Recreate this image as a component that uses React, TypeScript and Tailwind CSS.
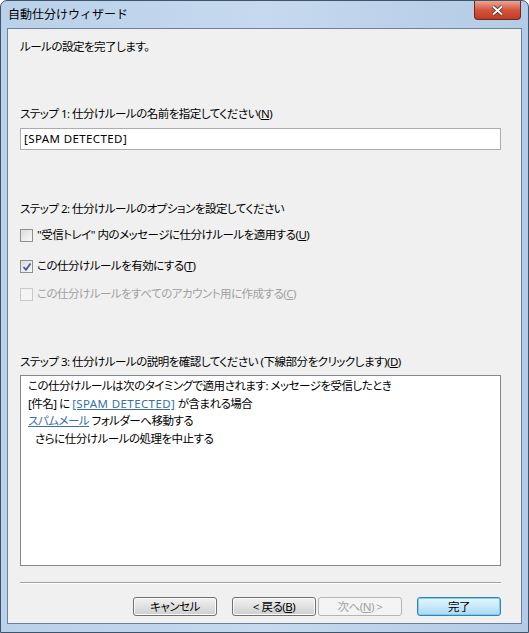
import React from "react";

const font = "font-['Noto_Sans','Noto_Sans_CJK_JP',sans-serif] [font-feature-settings:'palt']";

function Checkbox({ checked, disabled }: { checked?: boolean; disabled?: boolean }) {
  return (
    <span
      className={`relative inline-block w-[13px] h-[13px] border shrink-0 ${
        disabled ? "border-[#c9c9c9] bg-[#f4f4f4]" : "border-[#8e8f8f] bg-gradient-to-br from-[#dcdcdc] to-[#f8f8f8]"
      }`}
    >
      {checked && (
        <svg className="absolute left-[1px] top-[1px]" width="10" height="10" viewBox="0 0 10 10">
          <path d="M1.5 5 L4 7.8 L8.5 1.5" fill="none" stroke="#4a5a8f" strokeWidth="1.8" />
        </svg>
      )}
    </span>
  );
}

function Button({ children, disabled, primary, className }: { children: React.ReactNode; disabled?: boolean; primary?: boolean; className?: string }) {
  return (
    <div
      className={`h-[19px] w-[84px] flex items-center justify-center rounded-[3px] border ${
        disabled
          ? "border-[#b5b5b5] bg-[#f4f4f4] text-[#a0a0a0]"
          : primary
          ? "border-[#3c7fb1] bg-gradient-to-b from-[#eaf6fd] to-[#a7d9f5] text-black shadow-[inset_0_0_0_1px_#6fd3fa]"
          : "border-[#707070] bg-gradient-to-b from-[#f2f2f2] to-[#cfcfcf] text-black shadow-[inset_0_0_0_1px_#fcfcfc]"
      } ${className ?? ""}`}
    >
      {children}
    </div>
  );
}

const latin = "tracking-[0.4px]";

export default function App() {
  return (
    <div className={`w-[529px] h-[633px] ${font} text-[11.5px] tracking-[-0.5px] leading-[16px] text-black`}>
      <div className="relative w-full h-full rounded-t-[7px] border border-[#3f5469] bg-gradient-to-r from-[#b9d1ea] via-[#c6d9ee] to-[#b3cbe6] flex flex-col">
        {/* title */}
        <div className="h-[27px] pl-[7px] flex items-center text-[12px] tracking-normal [font-feature-settings:normal]">自動仕分けウィザード</div>
        <div className="absolute right-[7px] top-0 w-[47px] h-[19px] rounded-b-[4px] border border-t-0 border-[#6b2a20] bg-gradient-to-b from-[#e8a593] via-[#d4543b] to-[#c23b22] flex items-center justify-center">
          <svg width="13" height="11" viewBox="0 0 13 11">
            <path d="M2 1.5 L11 9.5 M11 1.5 L2 9.5" stroke="#4a2018" strokeWidth="3.4" />
            <path d="M2 1.5 L11 9.5 M11 1.5 L2 9.5" stroke="#ffffff" strokeWidth="2" />
          </svg>
        </div>

        {/* client */}
        <div className="mx-[6px] h-[596px] border border-[#6c8199] bg-[#f0f0f0] flex flex-col pl-[12px] pr-[20px]">
          <div className="mt-[10px] h-[16px] flex items-center">ルールの設定を完了します。</div>

          <div className="mt-[51px] h-[16px] flex items-center">
            ステップ 1: 仕分けルールの名前を指定してください(<u>N</u>)
          </div>
          <div className="mt-[6px] h-[22px] border border-[#abadb3] bg-white flex items-center pl-[3px]">
            <span className={latin}>[SPAM DETECTED]</span>
          </div>

          <div className="mt-[51px] h-[16px] flex items-center">
            ステップ 2: 仕分けルールのオプションを設定してください
          </div>
          <div className="mt-[10px] h-[16px] flex items-center gap-[4px]">
            <Checkbox />
            <span>"受信トレイ" 内のメッセージに仕分けルールを適用する(<u>U</u>)</span>
          </div>
          <div className="mt-[15px] h-[16px] flex items-center gap-[4px]">
            <Checkbox checked />
            <span>この仕分けルールを有効にする(<u>T</u>)</span>
          </div>
          <div className="mt-[12px] h-[16px] flex items-center gap-[4px] text-[#a0a0a0]">
            <Checkbox disabled />
            <span>この仕分けルールをすべてのアカウント用に作成する(<u>C</u>)</span>
          </div>

          <div className="mt-[52px] h-[16px] flex items-center">
            ステップ 3: 仕分けルールの説明を確認してください (下線部分をクリックします)(<u>D</u>)
          </div>
          <div className="mt-[5px] h-[191px] border border-[#828790] bg-white pl-[7px] pt-[1px] leading-[17.5px]">
            <div>この仕分けルールは次のタイミングで適用されます: メッセージを受信したとき</div>
            <div>
              [件名] に <span className={`text-[#3a6fa8] underline ${latin}`}>[SPAM DETECTED]</span> が含まれる場合
            </div>
            <div>
              <span className="text-[#3a6fa8] underline">スパムメール</span> フォルダーへ移動する
            </div>
            <div className="pl-[7px]">さらに仕分けルールの処理を中止する</div>
          </div>

          <div className="mt-[16px] h-[1px] bg-[#a0a0a0] border-b border-white box-content" />

          <div className="mt-[13px] flex">
            <Button className="ml-[113px]">キャンセル</Button>
            <Button className="ml-[15px]">
              &lt; 戻る(<u>B</u>)
            </Button>
            <Button disabled className="ml-[2px]">
              次へ(<u>N</u>) &gt;
            </Button>
            <Button primary className="ml-[15px]">完了</Button>
          </div>
        </div>
      </div>
    </div>
  );
}
